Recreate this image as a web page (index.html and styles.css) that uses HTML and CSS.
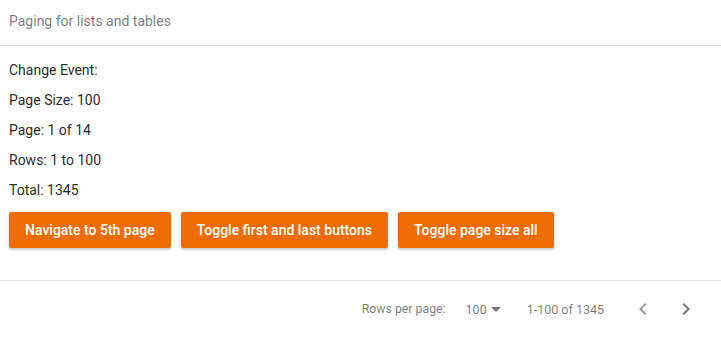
FILE: index.html
```html
<!DOCTYPE html>
<html lang="en">

<head>
    <meta charset="UTF-8">
    <meta name="viewport" content="width=device-width, initial-scale=1.0">
    <title>Paging for lists and tables</title>
    <link rel="stylesheet" href="styles.css">
</head>

<body>
    <div class="card-header">Paging for lists and tables</div>

    <div class="card-body">
        <p>Change Event:</p>
        <p>Page Size: 100</p>
        <p>Page: 1 of 14</p>
        <p>Rows: 1 to 100</p>
        <p>Total: 1345</p>

        <div class="actions">
            <button class="btn">Navigate to 5th page</button>
            <button class="btn">Toggle first and last buttons</button>
            <button class="btn">Toggle page size all</button>
        </div>
    </div>

    <div class="paginator">
        <span class="page-size-label">Rows per page:</span>
        <div class="page-size-select">
            <span>100</span>
            <span class="arrow"></span>
        </div>
        <span class="range-label">1-100 of 1345</span>
        <button class="icon-btn" disabled>
            <svg viewBox="0 0 24 24" width="24" height="24"><path d="M15.41 7.41L14 6l-6 6 6 6 1.41-1.41L10.83 12z"/></svg>
        </button>
        <button class="icon-btn">
            <svg viewBox="0 0 24 24" width="24" height="24"><path d="M8.59 16.59L10 18l6-6-6-6-1.41 1.41L13.17 12z"/></svg>
        </button>
    </div>
</body>

</html>
```

FILE: styles.css
```css
body {
    font-family: Roboto, "Liberation Sans", sans-serif;
    background-color: #fff;
    color: rgba(0, 0, 0, 0.87);
    margin: 0;
    padding: 0;
}

.card-header {
    height: 45px;
    line-height: 42px;
    padding: 0 9px;
    font-size: 14px;
    color: rgba(0, 0, 0, 0.54);
    border-bottom: 1px solid #e0e0e0;
}

.card-body {
    padding: 14px 9px 32px;
    border-bottom: 1px solid #e0e0e0;
}

.card-body p {
    margin: 0 0 10px;
    font-size: 14px;
    line-height: 20px;
}

.actions {
    display: flex;
    gap: 10px;
    margin-top: 12px;
}

.btn {
    height: 36px;
    padding: 0 16px;
    font-family: Roboto, "Liberation Sans", sans-serif;
    font-size: 14px;
    font-weight: 500;
    color: #fff;
    background-color: #ef6c00;
    border: none;
    border-radius: 2px;
    box-shadow: 0 2px 2px 0 rgba(0, 0, 0, 0.14), 0 1px 4px 0 rgba(0, 0, 0, 0.12);
    cursor: pointer;
}

.paginator {
    display: flex;
    align-items: center;
    justify-content: flex-end;
    height: 56px;
    padding: 0 15px 0 8px;
    font-size: 12.5px;
    color: rgba(0, 0, 0, 0.54);
}

.page-size-label {
    font-size: 12.3px;
}

.page-size-select {
    display: flex;
    align-items: center;
    margin-left: 20px;
}

.arrow {
    width: 0;
    height: 0;
    margin-left: 4px;
    border-left: 5px solid transparent;
    border-right: 5px solid transparent;
    border-top: 5px solid rgba(0, 0, 0, 0.54);
}

.range-label {
    margin: 0 16px 0 26px;
}

.icon-btn {
    width: 40px;
    height: 40px;
    padding: 0;
    margin-left: 3px;
    display: flex;
    align-items: center;
    justify-content: center;
    background: none;
    border: none;
    cursor: pointer;
    fill: rgba(0, 0, 0, 0.54);
}

.icon-btn:disabled {
    fill: rgba(0, 0, 0, 0.38);
    cursor: default;
}
```
